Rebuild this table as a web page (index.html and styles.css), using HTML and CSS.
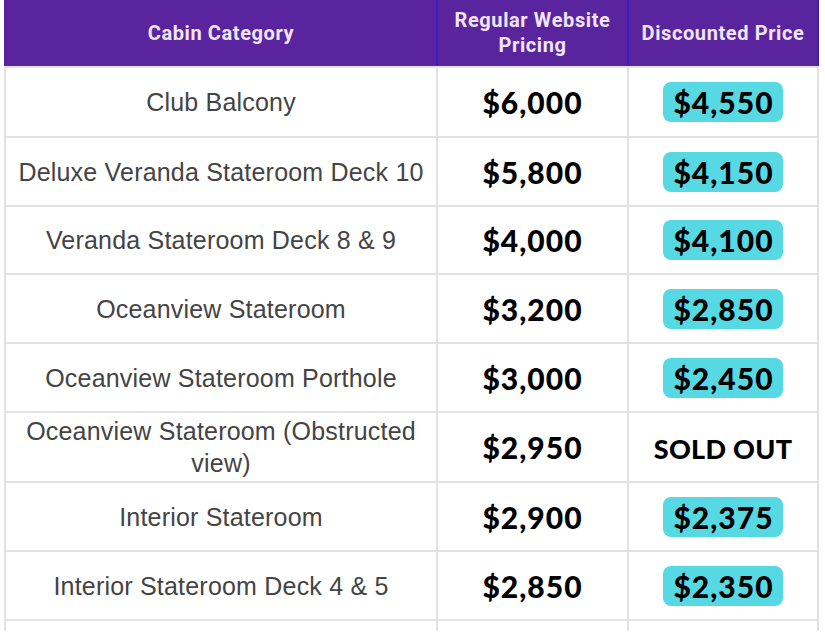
FILE: index.html
```html
<!DOCTYPE html>
<html>
<head>
<meta charset="utf-8">
<link rel="stylesheet" href="styles.css">
</head>
<body>
<table class="pricing">
  <colgroup>
    <col class="c-cat">
    <col class="c-reg">
    <col class="c-disc">
  </colgroup>
  <thead>
    <tr>
      <th>Cabin Category</th>
      <th>Regular Website<br>Pricing</th>
      <th>Discounted Price</th>
    </tr>
  </thead>
  <tbody>
    <tr class="tall"><td class="cat">Club Balcony</td><td class="reg">$6,000</td><td class="disc"><span class="badge">$4,550</span></td></tr>
    <tr><td class="cat">Deluxe Veranda Stateroom Deck 10</td><td class="reg">$5,800</td><td class="disc"><span class="badge">$4,150</span></td></tr>
    <tr class="short"><td class="cat">Veranda Stateroom Deck 8 &amp; 9</td><td class="reg">$4,000</td><td class="disc"><span class="badge">$4,100</span></td></tr>
    <tr><td class="cat">Oceanview Stateroom</td><td class="reg">$3,200</td><td class="disc"><span class="badge">$2,850</span></td></tr>
    <tr><td class="cat">Oceanview Stateroom Porthole</td><td class="reg">$3,000</td><td class="disc"><span class="badge">$2,450</span></td></tr>
    <tr class="tall"><td class="cat">Oceanview Stateroom (Obstructed view)</td><td class="reg">$2,950</td><td class="disc"><span class="sold">SOLD OUT</span></td></tr>
    <tr><td class="cat">Interior Stateroom</td><td class="reg">$2,900</td><td class="disc"><span class="badge">$2,375</span></td></tr>
    <tr><td class="cat">Interior Stateroom Deck 4 &amp; 5</td><td class="reg">$2,850</td><td class="disc"><span class="badge">$2,350</span></td></tr>
    <tr class="partial"><td></td><td></td><td></td></tr>
  </tbody>
</table>
</body>
</html>
```
FILE: styles.css
```css
html, body {
  margin: 0;
  padding: 0;
  background: #ffffff;
}
body {
  padding-left: 4px;
  overflow: hidden;
  height: 639px;
}
.pricing {
  border-collapse: collapse;
  table-layout: fixed;
  width: 813px;
}
.c-cat { width: 432px; }
.c-reg { width: 191px; }
.c-disc { width: 190px; }

.pricing th {
  background: #5a249e;
  color: #f1e6ff;
  font-family: Roboto, "Liberation Sans", sans-serif;
  font-weight: 700;
  font-size: 20px;
  letter-spacing: 0.6px;
  line-height: 25px;
  height: 66px;
  padding: 0 2px;
  text-align: center;
  vertical-align: middle;
  border-left: 2px solid #3c1bc9;
  border-right: 2px solid #3c1bc9;
  border-top: none;
  border-bottom: 2px solid #e2e2e2;
}
.pricing th:first-child {
  border-left: 2px solid #5a249e;
}
.pricing td {
  height: 67px;
  padding: 0 8px;
  border: 2px solid #e2e2e2;
  text-align: center;
  vertical-align: middle;
}
.pricing tr.tall td {
  height: 68px;
}
.pricing tr.short td {
  height: 66px;
}
.cat {
  font-family: "Liberation Sans", Arial, sans-serif;
  font-size: 25px;
  letter-spacing: 0.2px;
  line-height: 32px;
  color: #444444;
}
.reg {
  font-family: Lato, "Liberation Sans", sans-serif;
  font-weight: 900;
  font-size: 30px;
  letter-spacing: 1px;
  color: #000000;
}
.disc {
  font-family: Lato, "Liberation Sans", sans-serif;
  font-weight: 900;
  font-size: 30px;
  letter-spacing: 1px;
  color: #000000;
}
.badge {
  display: inline-block;
  background: #56d9e3;
  border-radius: 8px;
  padding: 2px 9px 2px 10px;
  line-height: 36px;
}
.sold {
  font-size: 27px;
  letter-spacing: 0.3px;
}
.pricing tr.partial td {
  height: 10px;
  border-bottom: none;
}
```
